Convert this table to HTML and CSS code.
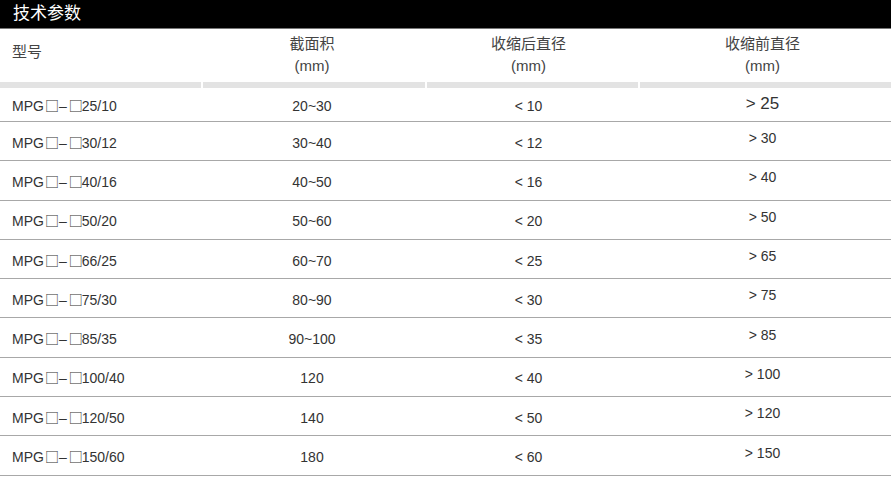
FILE: index.html
```html
<!DOCTYPE html>
<html lang="zh">
<head>
<meta charset="utf-8">
<link rel="stylesheet" href="styles.css">
</head>
<body>
<div class="title">技术参数</div>
<div class="head">
  <div class="hc first">型号</div>
  <div class="hc">截面积<br>(mm)</div>
  <div class="hc">收缩后直径<br>(mm)</div>
  <div class="hc">收缩前直径<br>(mm)</div>
</div>
<div class="bar">
  <span></span><span></span><span></span><span></span>
</div>
<div class="rows">
  <div class="row r1"><div class="c first">MPG<span class="bx">□</span><span class="ds">–</span><span class="bx">□</span>25/10</div><div class="c">20~30</div><div class="c">&lt; 10</div><div class="c big">&gt; 25</div></div>
  <div class="row"><div class="c first">MPG<span class="bx">□</span><span class="ds">–</span><span class="bx">□</span>30/12</div><div class="c">30~40</div><div class="c">&lt; 12</div><div class="c up">&gt; 30</div></div>
  <div class="row"><div class="c first">MPG<span class="bx">□</span><span class="ds">–</span><span class="bx">□</span>40/16</div><div class="c">40~50</div><div class="c">&lt; 16</div><div class="c up">&gt; 40</div></div>
  <div class="row"><div class="c first">MPG<span class="bx">□</span><span class="ds">–</span><span class="bx">□</span>50/20</div><div class="c">50~60</div><div class="c">&lt; 20</div><div class="c up">&gt; 50</div></div>
  <div class="row"><div class="c first">MPG<span class="bx">□</span><span class="ds">–</span><span class="bx">□</span>66/25</div><div class="c">60~70</div><div class="c">&lt; 25</div><div class="c up">&gt; 65</div></div>
  <div class="row"><div class="c first">MPG<span class="bx">□</span><span class="ds">–</span><span class="bx">□</span>75/30</div><div class="c">80~90</div><div class="c">&lt; 30</div><div class="c up">&gt; 75</div></div>
  <div class="row"><div class="c first">MPG<span class="bx">□</span><span class="ds">–</span><span class="bx">□</span>85/35</div><div class="c">90~100</div><div class="c">&lt; 35</div><div class="c up">&gt; 85</div></div>
  <div class="row"><div class="c first">MPG<span class="bx">□</span><span class="ds">–</span><span class="bx">□</span>100/40</div><div class="c">120</div><div class="c">&lt; 40</div><div class="c up">&gt; 100</div></div>
  <div class="row"><div class="c first">MPG<span class="bx">□</span><span class="ds">–</span><span class="bx">□</span>120/50</div><div class="c">140</div><div class="c">&lt; 50</div><div class="c up">&gt; 120</div></div>
  <div class="row"><div class="c first">MPG<span class="bx">□</span><span class="ds">–</span><span class="bx">□</span>150/60</div><div class="c">180</div><div class="c">&lt; 60</div><div class="c up">&gt; 150</div></div>
</div>
</body>
</html>
```
FILE: styles.css
```css
* { box-sizing: border-box; }
html, body { margin: 0; padding: 0; background: #fff; }
body {
  width: 891px;
  font-family: "Liberation Sans", "Noto Sans CJK SC", sans-serif;
  color: #333;
}
.title {
  height: 29px;
  background: #000;
  color: #fff;
  font-size: 17px;
  line-height: 28px;
  padding-left: 13px;
  border-bottom: 1px solid #777;
}
.head, .row, .bar {
  display: grid;
  grid-template-columns: 201px 222px 211px 1fr;
}
.head { height: 53px; padding-top: 4px; }
.hc {
  text-align: center;
  font-size: 15px;
  line-height: 22px;
  color: #444;
}
.hc.first { text-align: left; padding-left: 12px; padding-top: 8px; }
.bar { column-gap: 2px; height: 6px; }
.bar span { background: #e3e3e3; }
.row {
  height: 39.3px;
  border-bottom: 1px solid #a8a8a8;
  align-items: center;
  font-size: 14px;
}
.row.r1 { height: 34px; }
.c { text-align: center; padding-top: 3px; }
.c.first { text-align: left; padding-left: 12px; }
.bx {
  font-family: "Noto Sans CJK SC", sans-serif;
  font-size: 14px;
  display: inline-block;
  width: 13px;
  margin-left: 1px;
  line-height: 1;
}
.ds { display: inline-block; margin: 0 1px 0 1px; }
.c.up { padding-top: 0; padding-bottom: 6px; }
.c.big { font-size: 17px; padding-top: 0; padding-bottom: 2px; }
```
